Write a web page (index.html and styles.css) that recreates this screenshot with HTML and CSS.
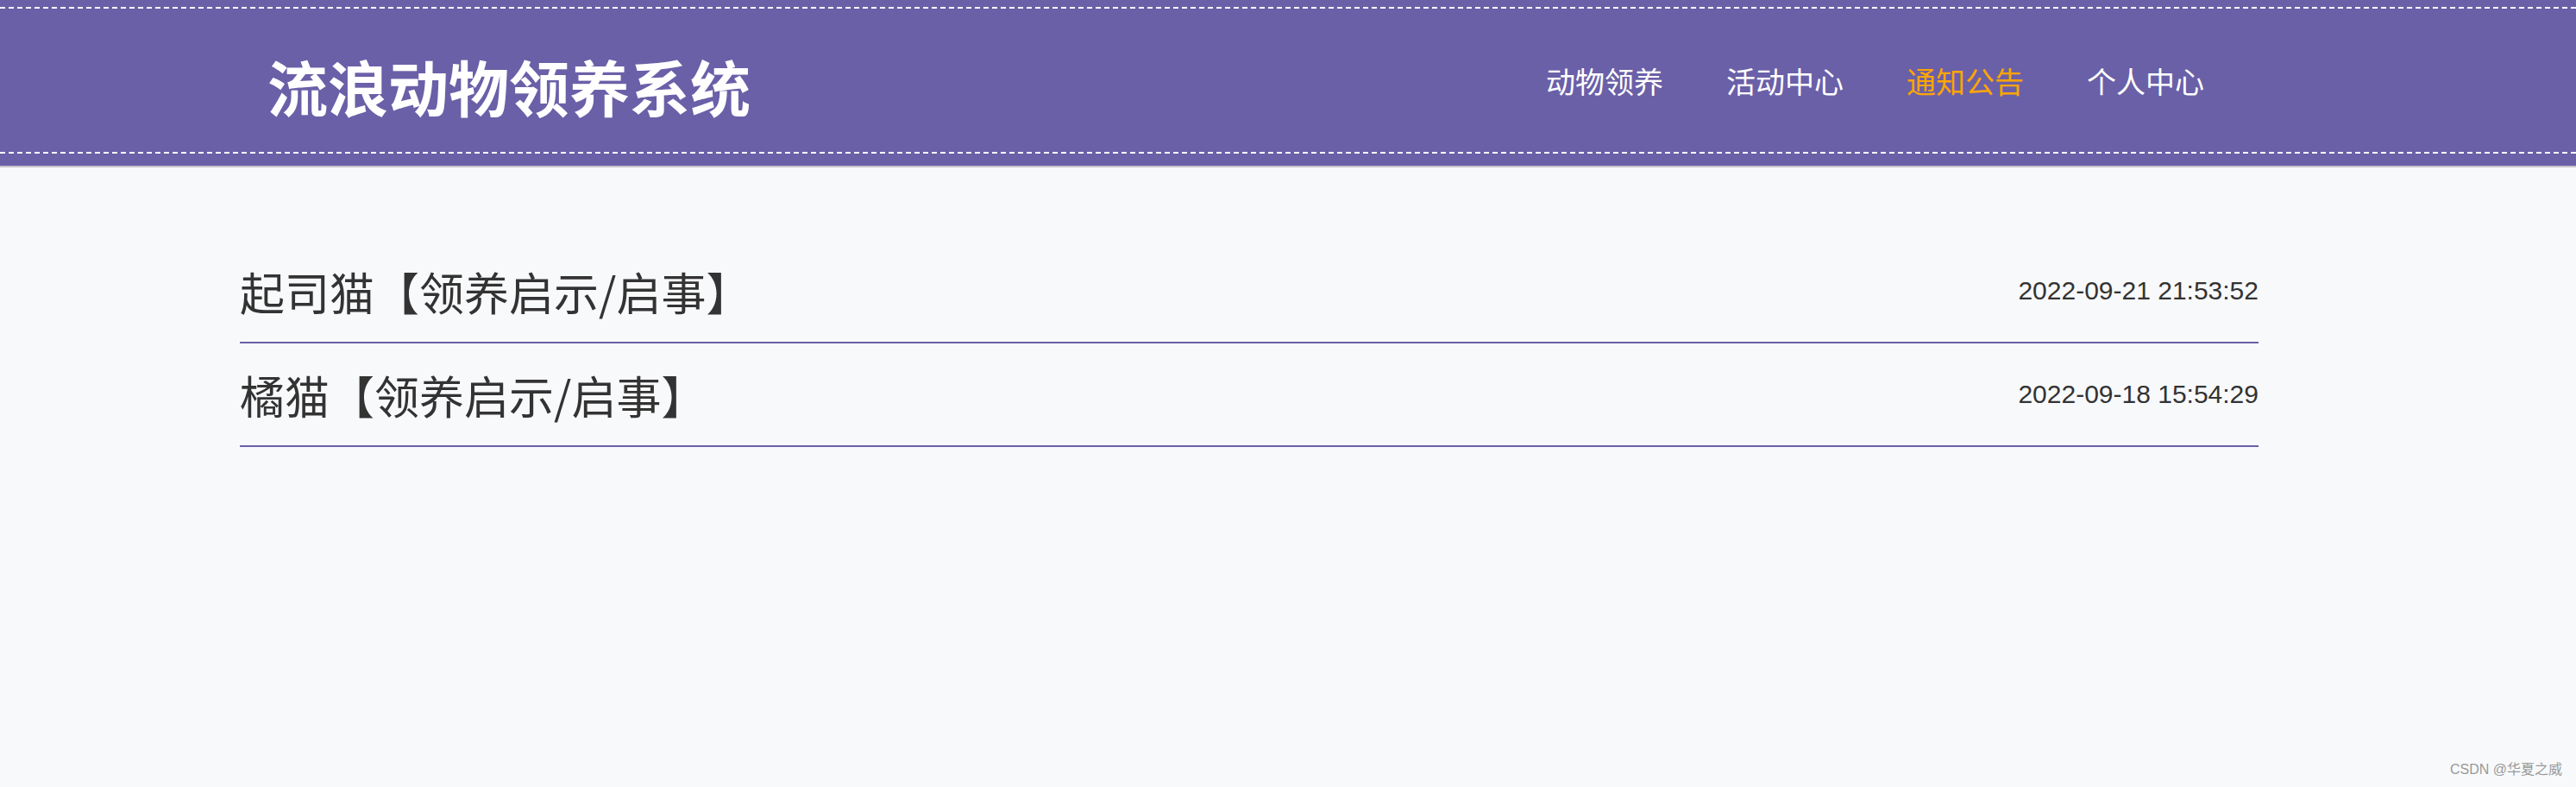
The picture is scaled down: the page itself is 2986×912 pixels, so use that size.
FILE: index.html
```html
<!DOCTYPE html>
<html lang="zh-CN">
<head>
    <meta charset="UTF-8">
    <meta name="viewport" content="width=device-width, initial-scale=1.0">
    <title>通知公告 - 流浪动物领养系统</title>
    <link rel="stylesheet" href="styles.css">
</head>
<body>
    <header class="header">
        <div class="header-inner">
            <h1 class="logo">流浪动物领养系统</h1>
            <nav class="nav">
                <a href="#">动物领养</a>
                <a href="#">活动中心</a>
                <a href="#" class="active">通知公告</a>
                <a href="#">个人中心</a>
            </nav>
        </div>
    </header>

    <ul class="notice-list">
        <li class="notice-item">
            <a href="#" class="notice-title">起司猫【领养启示/启事】</a>
            <span class="notice-time">2022-09-21 21:53:52</span>
        </li>
        <li class="notice-item">
            <a href="#" class="notice-title">橘猫【领养启示/启事】</a>
            <span class="notice-time">2022-09-18 15:54:29</span>
        </li>
    </ul>

    <div class="watermark">CSDN @华夏之威</div>
</body>
</html>
```

FILE: styles.css
```css
body {
    margin: 0;
    min-height: 912px;
    background-color: #f8f9fb;
    font-family: "Noto Sans CJK SC", sans-serif;
    color: #333;
}

/* 顶部导航 */
.header {
    background-color: #6a60a8;
    padding: 8px 0 14px;
    border-bottom: 2px solid #cdc5c9;
}

.header-inner {
    height: 166px;
    border-top: 2px dashed #fff;
    border-bottom: 2px dashed #fff;
    display: flex;
    align-items: center;
    justify-content: space-between;
    padding: 0 431px 0 310px;
}

.logo {
    margin: 14px 0 0;
    font-size: 70px;
    font-weight: 700;
    color: #fff;
    line-height: 1;
}

.nav {
    display: flex;
    gap: 73px;
}

.nav a {
    font-size: 34px;
    color: #fff;
    text-decoration: none;
}

.nav a.active {
    color: #ffa500;
}

/* 公告列表 */
.notice-list {
    list-style: none;
    margin: 84px 368px 0 278px;
    padding: 0;
}

.notice-item {
    height: 118px;
    display: flex;
    align-items: center;
    justify-content: space-between;
    border-bottom: 2px solid #6a60a8;
}

.notice-title {
    font-size: 52px;
    color: #333;
    text-decoration: none;
}

.notice-time {
    font-family: "Liberation Sans", "Noto Sans CJK SC", sans-serif;
    font-size: 30px;
    color: #333;
}

.watermark {
    position: absolute;
    right: 16px;
    bottom: 10px;
    font-family: "Liberation Sans", "Noto Sans CJK SC", sans-serif;
    font-size: 16px;
    color: #999;
}
```
